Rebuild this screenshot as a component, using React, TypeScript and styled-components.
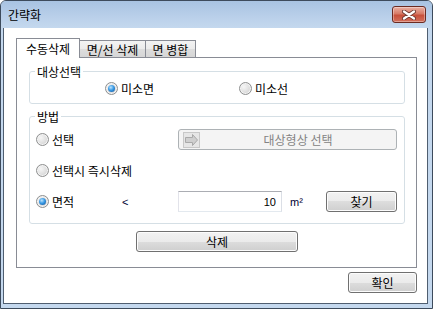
import React from 'react'
import styled, { createGlobalStyle } from 'styled-components'

const GlobalStyle = createGlobalStyle`
    html, body {
        margin: 0;
        padding: 0;
        background: #ffffff;
    }
    body {
        font-family: "Noto Sans CJK KR", "Noto Sans", sans-serif;
        font-size: 12px;
        color: #000000;
    }
    * {
        box-sizing: border-box;
    }
`

const WindowStyled = styled.div`
    width: 433px;
    height: 309px;
    display: flex;
    flex-direction: column;
    border: 1px solid #3d4b5c;
    border-radius: 6px 6px 0 0;
    background: #c4d8ee;
    overflow: hidden;
`

const TitleBarStyled = styled.div`
    height: 27px;
    flex: none;
    display: flex;
    align-items: center;
    justify-content: space-between;
    padding: 0 6px 0 7px;
    background: linear-gradient(#a8c3e2, #bad0ea 60%, #c4d8ee);
`

const TitleStyled = styled.span`
    font-size: 12px;
    line-height: 16px;
    color: #000;
`

const CloseButtonStyled = styled.div`
    width: 34px;
    height: 17px;
    display: flex;
    align-items: center;
    justify-content: center;
    border: 1px solid #6b2b22;
    border-radius: 3px;
    background: linear-gradient(#eab1a4 0%, #d77a66 45%, #c7503b 55%, #d3705c 100%);
    box-shadow: inset 0 0 0 1px rgba(255, 255, 255, 0.35);
`

const ClientStyled = styled.div`
    flex: 1;
    display: flex;
    flex-direction: column;
    margin: 0 4px 4px 2px;
    padding: 10px 10px 0 12px;
    border: 1px solid #4f5e70;
    border-top: none;
    background: #ffffff;
`

const TabRowStyled = styled.div`
    height: 20px;
    display: flex;
    align-items: flex-end;
    margin-bottom: -1px;
`

const TabStyled = styled.div<{ $active?: boolean, $width: number }>`
    position: relative;
    z-index: ${p => p.$active ? 1 : 0};
    width: ${p => p.$width}px;
    height: ${p => p.$active ? 20 : 18}px;
    margin-left: ${p => p.$active ? 0 : -1}px;
    display: flex;
    align-items: center;
    justify-content: center;
    border: 1px solid #898c95;
    border-bottom: ${p => p.$active ? 'none' : '1px solid #898c95'};
    background: ${p => p.$active ? '#ffffff' : 'linear-gradient(#f3f3f3, #ebebeb 50%, #dddddd 50%, #d6d6d6)'};
    line-height: 15px;
    padding-top: ${p => p.$active ? 0 : 1}px;
    white-space: nowrap;
`

const PanelStyled = styled.div`
    width: 401px;
    height: 211px;
    display: flex;
    flex-direction: column;
    align-items: stretch;
    padding: 6px 11px 0 12px;
    border: 1px solid #898c95;
    background: #ffffff;
`

const GroupStyled = styled.fieldset<{ $gap?: number }>`
    margin: ${p => p.$gap ?? 0}px 0 0 0;
    padding: 0;
    min-width: 0;
    border: 1px solid #d5dfe5;
    border-radius: 3px;
`

const LegendStyled = styled.legend`
    margin-left: 5px;
    padding: 0 2px;
    line-height: 15px;
`

const ChoiceRowStyled = styled.div`
    display: grid;
    grid-template-columns: 134px auto;
    padding: 2px 0 7px 75px;
`

const MethodBodyStyled = styled.div`
    display: flex;
    flex-direction: column;
    row-gap: 10px;
    padding: 5px 7px 11px 6px;
`

const MethodRowStyled = styled.div`
    height: 21px;
    display: flex;
    align-items: center;
`

const LeftCellStyled = styled.div`
    width: 142px;
    flex: none;
    display: flex;
    align-items: center;
`

const RightCellStyled = styled.div`
    flex: 1;
    display: flex;
    align-items: center;
`

const OptionStyled = styled.label<{ $width?: number }>`
    display: flex;
    align-items: center;
    column-gap: 3px;
    width: ${p => p.$width ? `${p.$width}px` : 'auto'};
    line-height: 15px;
    white-space: nowrap;
`

const RadioStyled = styled.span<{ $checked?: boolean }>`
    position: relative;
    width: 13px;
    height: 13px;
    flex: none;
    border-radius: 50%;
    border: 1px solid #8e8f8f;
    background: radial-gradient(circle at 35% 35%, #f6f6f6 0%, #dedede 55%, #c9c9c9 100%);
    box-shadow: inset 0 0 0 1px #f4f4f4;
    &::after {
        content: '';
        display: ${p => p.$checked ? 'block' : 'none'};
        position: absolute;
        left: 2px;
        top: 2px;
        width: 7px;
        height: 7px;
        border-radius: 50%;
        background: radial-gradient(circle at 40% 35%, #bfe4fb 0%, #3a9be6 45%, #0f4d92 100%);
    }
`

const LessThanStyled = styled.span`
    font-family: "Liberation Sans", Arial, sans-serif;
    font-size: 11px;
    color: #000033;
`

const ButtonStyled = styled.button<{ $width?: number }>`
    width: ${p => p.$width ? `${p.$width}px` : '100%'};
    height: 21px;
    flex: none;
    padding: 0;
    display: flex;
    align-items: center;
    justify-content: center;
    border: 1px solid #707070;
    border-radius: 3px;
    background: linear-gradient(#f2f2f2 0%, #ebebeb 50%, #dddddd 50%, #cfcfcf 100%);
    box-shadow: inset 0 0 0 1px #fcfcfc;
    font-family: inherit;
    font-size: 12px;
    line-height: 15px;
    color: #000;
`

const DisabledButtonStyled = styled(ButtonStyled)`
    justify-content: flex-start;
    padding-left: 4px;
    border-color: #adb2b5;
    background: #f4f4f4;
    box-shadow: none;
    color: #838383;
`

const ButtonTextStyled = styled.span`
    flex: 1;
    text-align: center;
`

const AreaInputStyled = styled.input`
    width: 104px;
    height: 21px;
    padding: 0 5px 0 0;
    border: 1px solid;
    border-color: #abadb3 #dbdfe6 #e3e9ef #e2e3ea;
    font-family: "Liberation Sans", Arial, sans-serif;
    font-size: 11px;
    text-align: right;
    color: #000;
    outline: none;
`

const UnitStyled = styled.span`
    margin-left: 8px;
    font-family: "Liberation Sans", Arial, sans-serif;
    font-size: 11px;
    color: #000033;
`

const FindButtonWrap = styled.div`
    margin-left: auto;
`

const CenterRowStyled = styled.div`
    display: flex;
    justify-content: center;
    margin-top: 7px;
`

const FooterStyled = styled.div`
    display: flex;
    justify-content: flex-end;
    width: 401px;
    margin-top: 4px;
`

const CloseIcon = () => (
    <svg width="14" height="10" viewBox="0 0 14 10">
        <path d="M2 1.5 L12 8.5 M12 1.5 L2 8.5" stroke="#6e3a32" strokeWidth="4" strokeLinecap="round" />
        <path d="M2 1.5 L12 8.5 M12 1.5 L2 8.5" stroke="#ffffff" strokeWidth="2.2" strokeLinecap="round" />
    </svg>
)

const ArrowIcon = () => (
    <svg width="17" height="16" viewBox="0 0 17 16">
        <rect x="0.5" y="0.5" width="16" height="15" fill="#e6e6e6" stroke="#c8c8c8" />
        <path d="M2.5 5.5 H9.5 V2.5 L14.5 8 L9.5 13.5 V10.5 H2.5 Z" fill="#cfcfcf" stroke="#a9a9a9" />
    </svg>
)

const Radio = ({ text, checked, width }: { text: string, checked?: boolean, width?: number }) => <OptionStyled $width={width}>
    <RadioStyled $checked={checked} />
    <span>{text}</span>
</OptionStyled>

export default function App() {
    return (
        <>
            <GlobalStyle />
            <WindowStyled>
                <TitleBarStyled>
                    <TitleStyled>간략화</TitleStyled>
                    <CloseButtonStyled><CloseIcon /></CloseButtonStyled>
                </TitleBarStyled>
                <ClientStyled>
                    <TabRowStyled>
                        <TabStyled $active $width={64}>수동삭제</TabStyled>
                        <TabStyled $width={67}>면/선 삭제</TabStyled>
                        <TabStyled $width={51}>면 병합</TabStyled>
                    </TabRowStyled>
                    <PanelStyled>
                        <GroupStyled>
                            <LegendStyled>대상선택</LegendStyled>
                            <ChoiceRowStyled>
                                <Radio text='미소면' checked />
                                <Radio text='미소선' />
                            </ChoiceRowStyled>
                        </GroupStyled>
                        <GroupStyled $gap={5}>
                            <LegendStyled>방법</LegendStyled>
                            <MethodBodyStyled>
                                <MethodRowStyled>
                                    <LeftCellStyled><Radio text='선택' /></LeftCellStyled>
                                    <RightCellStyled>
                                        <DisabledButtonStyled disabled>
                                            <ArrowIcon />
                                            <ButtonTextStyled>대상형상 선택</ButtonTextStyled>
                                        </DisabledButtonStyled>
                                    </RightCellStyled>
                                </MethodRowStyled>
                                <MethodRowStyled>
                                    <LeftCellStyled><Radio text='선택시 즉시삭제' /></LeftCellStyled>
                                </MethodRowStyled>
                                <MethodRowStyled>
                                    <LeftCellStyled>
                                        <Radio text='면적' checked width={86} />
                                        <LessThanStyled>&lt;</LessThanStyled>
                                    </LeftCellStyled>
                                    <RightCellStyled>
                                        <AreaInputStyled defaultValue='10' />
                                        <UnitStyled>m²</UnitStyled>
                                        <FindButtonWrap>
                                            <ButtonStyled $width={71}>찾기</ButtonStyled>
                                        </FindButtonWrap>
                                    </RightCellStyled>
                                </MethodRowStyled>
                            </MethodBodyStyled>
                        </GroupStyled>
                        <CenterRowStyled>
                            <ButtonStyled $width={162}>삭제</ButtonStyled>
                        </CenterRowStyled>
                    </PanelStyled>
                    <FooterStyled>
                        <ButtonStyled $width={69}>확인</ButtonStyled>
                    </FooterStyled>
                </ClientStyled>
            </WindowStyled>
        </>
    )
}
